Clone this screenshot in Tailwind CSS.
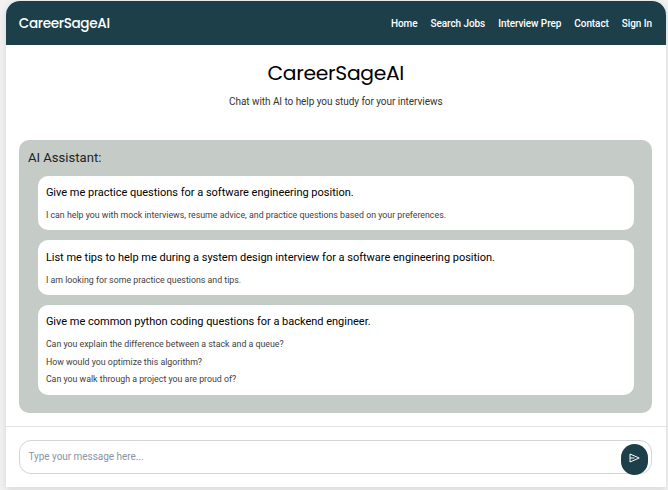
<!DOCTYPE html>
<html lang="en">
<head>
<meta charset="utf-8">
<title>CareerSageAI</title>
<script src="https://cdn.jsdelivr.net/npm/@tailwindcss/browser@4"></script>
</head>
<body class="h-[490px] overflow-hidden bg-[#f2f2f2] pt-px pl-[6px] font-[Roboto,sans-serif] text-black">
<div class="flex h-[486px] w-[659.5px] flex-col rounded-t-[14px] bg-white shadow-[0_2px_8px_rgba(0,0,0,0.12)]">
  <header class="flex h-11 shrink-0 items-center justify-between rounded-t-[14px] bg-[#1c3f4a] pr-[13.5px] pl-[12.8px] text-white">
    <span class="pt-[2px] font-[Poppins,Inter,sans-serif] text-[13.6px] font-medium tracking-[-0.35px]">CareerSageAI</span>
    <nav class="flex gap-[13px] pt-px text-[10px] font-medium tracking-[-0.08px]">
      <a>Home</a><a>Search Jobs</a><a>Interview Prep</a><a>Contact</a><a>Sign In</a>
    </nav>
  </header>
  <section class="h-[94.5px] shrink-0 pt-[15px] text-center">
    <h1 class="font-[Poppins,Inter,sans-serif] text-[20.3px] leading-[27px] tracking-[-0.3px]">CareerSageAI</h1>
    <p class="mt-[7px] text-[10px] leading-4 tracking-[-0.05px] text-[#333]">Chat with AI to help you study for your interviews</p>
  </section>
  <main class="mr-[13.5px] ml-[13.4px] h-[273.5px] shrink-0 rounded-[10px] bg-[#c5ccc8] pr-[18px] pl-[18.3px]">
    <h2 class="-ml-[9.8px] h-9 pt-[8px] text-[13.1px] leading-5 text-[#222]">AI Assistant:</h2>
    <div class="flex flex-col gap-[10px]">
      <article class="h-[54.5px] rounded-[10px] bg-white px-[8.2px] pt-[9px]">
        <h3 class="text-[11px] leading-4 tracking-[-0.01px]">Give me practice questions for a software engineering position.</h3>
        <p class="mt-[6px] text-[8.8px] leading-4 text-[#404040]">I can help you with mock interviews, resume advice, and practice questions based on your preferences.</p>
      </article>
      <article class="h-[55px] rounded-[10px] bg-white px-[8.2px] pt-[9.5px]">
        <h3 class="text-[11px] leading-4 tracking-[-0.01px]">List me tips to help me during a system design interview for a software engineering position.</h3>
        <p class="mt-[6.5px] text-[8.8px] leading-4 text-[#404040]">I am looking for some practice questions and tips.</p>
      </article>
      <article class="h-[90px] rounded-[10px] bg-white px-[8.2px] pt-[9px]">
        <h3 class="text-[11px] leading-4 tracking-[-0.01px]">Give me common python coding questions for a backend engineer.</h3>
        <div class="mt-[6px] text-[8.8px] leading-[17.5px] text-[#404040]">
          <p>Can you explain the difference between a stack and a queue?</p>
          <p>How would you optimize this algorithm?</p>
          <p>Can you walk through a project you are proud of?</p>
        </div>
      </article>
    </div>
  </main>
  <footer class="mt-[13px] border-t border-[#dfe4e3] pt-[13px] pr-[13.5px] pl-[13px]">
    <div class="flex h-[34px] items-center justify-between rounded-[12px] border border-[#d2d5d7] pr-[3px] pl-[8.5px]">
      <span class="-mt-px text-[10px] tracking-[-0.04px] text-[#8b93a1]">Type your message here...</span>
      <button class="mt-[5px] flex h-[31px] w-[27px] shrink-0 items-center justify-center rounded-full bg-[#1c3f4a]">
        <svg class="-mt-[4px] mr-[1px] h-[10px] w-[11px]" viewBox="0 0 11 10" fill="none" stroke="#fff" stroke-width="1" stroke-linejoin="round"><path d="M1 1 10.2 5 1 9ZM1 5H5.5"/></svg>
      </button>
    </div>
  </footer>
</div>
</body>
</html>
